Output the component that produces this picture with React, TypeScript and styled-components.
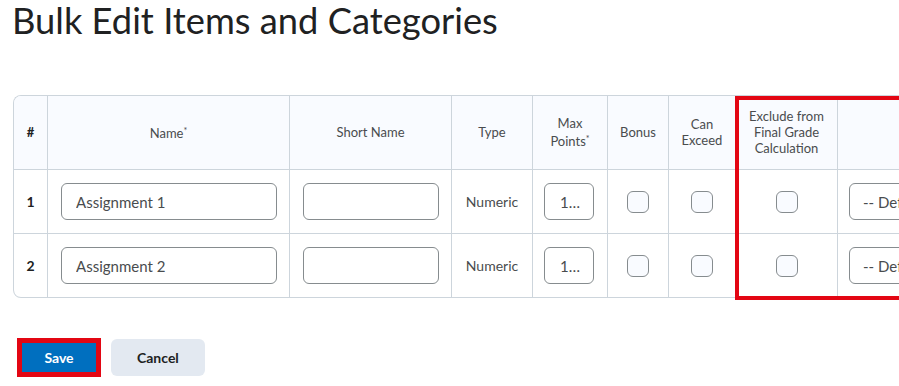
import React from "react"
import styled, { createGlobalStyle } from "styled-components"

const GlobalStyle = createGlobalStyle`
  html, body {
    margin: 0;
    padding: 0;
    overflow: hidden;
    background: #ffffff;
  }
  body {
    font-family: "Lato", "Open Sans", sans-serif;
    color: #202122;
  }
`

const items = [
  { id: 1, name: "Assignment 1", shortName: "", type: "Numeric", maxPoints: "100" },
  { id: 2, name: "Assignment 2", shortName: "", type: "Numeric", maxPoints: "100" },
]

const App = () => {
  return (
    <Page>
      <GlobalStyle />
      <Title>Bulk Edit Items and Categories</Title>
      <Grid>
        <HeadCell corner="top">#</HeadCell>
        <HeadCell>
          <Label>
            Name<Star>*</Star>
          </Label>
        </HeadCell>
        <HeadCell>Short Name</HeadCell>
        <HeadCell>Type</HeadCell>
        <HeadCell>
          <Label>
            Max
            <br />
            Points<Star>*</Star>
          </Label>
        </HeadCell>
        <HeadCell>Bonus</HeadCell>
        <HeadCell>
          <Label>
            Can
            <br />
            Exceed
          </Label>
        </HeadCell>
        <HeadCell>
          <Label>
            Exclude from
            <br />
            Final Grade
            <br />
            Calculation
          </Label>
        </HeadCell>
        <HeadCell />

        {items.map((item, i) => (
          <React.Fragment key={item.id}>
            <NumCell corner={i === items.length - 1 ? "bottom" : undefined}>
              {item.id}
            </NumCell>
            <InputCell>
              <TextInput defaultValue={item.name} />
            </InputCell>
            <InputCell>
              <TextInput defaultValue={item.shortName} />
            </InputCell>
            <Cell>{item.type}</Cell>
            <Cell>
              <PointsInput defaultValue={item.maxPoints} />
            </Cell>
            <Cell>
              <Checkbox type="checkbox" />
            </Cell>
            <Cell>
              <Checkbox type="checkbox" />
            </Cell>
            <Cell>
              <Checkbox type="checkbox" />
            </Cell>
            <SelectCell>
              <Select>
                <option>-- Default Category --</option>
              </Select>
            </SelectCell>
          </React.Fragment>
        ))}

        <ColumnHighlight />
      </Grid>

      <Actions>
        <SaveHighlight>
          <PrimaryButton>Save</PrimaryButton>
        </SaveHighlight>
        <Button>Cancel</Button>
      </Actions>
    </Page>
  )
}

const Page = styled.div`
  padding: 0 0 0 13px;
  width: 1200px;
`

const Title = styled.h1`
  margin: 0 0 0 -1px;
  padding-top: 2px;
  font-size: 36.3px;
  line-height: 36px;
  font-weight: 400;
  color: #202122;
`

const Grid = styled.div`
  position: relative;
  margin-top: 57px;
  display: grid;
  grid-template-columns: 34px 242px 162px 81px 75px 61px 67px 102px 200px;
  grid-template-rows: 74px 64px 64px;
  border-top: 1px solid #cdd5dc;
  border-left: 1px solid #cdd5dc;
  border-radius: 8px 0 0 8px;
  width: max-content;
`

const Cell = styled.div`
  box-sizing: border-box;
  display: flex;
  align-items: center;
  justify-content: center;
  border-right: 1px solid #cdd5dc;
  border-bottom: 1px solid #cdd5dc;
  font-size: 14px;
  color: #494c4e;
  text-align: center;
`

const HeadCell = styled(Cell)<{ corner?: "top" }>`
  background: #f9fbff;
  font-size: 13px;
  line-height: 16px;
  padding-bottom: 2px;
  border-top-left-radius: ${(p) => (p.corner === "top" ? "7px" : "0")};
  font-weight: ${(p) => (p.corner === "top" ? 700 : 400)};
  color: ${(p) => (p.corner === "top" ? "#202122" : "#494c4e")};
`

const Label = styled.span`
  display: block;
`

const Star = styled.span`
  font-size: 9px;
  vertical-align: 4px;
`

const NumCell = styled(Cell)<{ corner?: "bottom" }>`
  font-weight: 700;
  color: #202122;
  border-bottom-left-radius: ${(p) => (p.corner === "bottom" ? "7px" : "0")};
`

const InputCell = styled(Cell)`
  padding: 0 12px 0 13px;
`

const SelectCell = styled(Cell)`
  justify-content: flex-start;
  padding-left: 11px;
  border-right: none;
`

const TextInput = styled.input`
  box-sizing: border-box;
  width: 100%;
  height: 37px;
  padding: 0 14px;
  border: 1px solid #868c8f;
  border-radius: 6px;
  background: #ffffff;
  font-family: "Lato", sans-serif;
  font-size: 15px;
  color: #494c4e;
  outline: none;
`

const PointsInput = styled(TextInput)`
  width: 50px;
  padding: 0 13px 0 15px;
  text-overflow: ellipsis;
  margin-left: -2px;
`

const Checkbox = styled.input`
  appearance: none;
  margin: 0;
  width: 22px;
  height: 22px;
  border: 1px solid #868c8f;
  border-radius: 6px;
  background: #f9fbff;
`

const Select = styled.select`
  appearance: none;
  box-sizing: border-box;
  width: 190px;
  height: 37px;
  padding: 0 13px;
  border: 1px solid #868c8f;
  border-radius: 6px;
  background: #ffffff;
  font-family: "Lato", sans-serif;
  font-size: 15px;
  color: #494c4e;
`

const ColumnHighlight = styled.div`
  position: absolute;
  grid-column: 8;
  grid-row: 1 / 4;
  top: 0;
  bottom: -2px;
  left: -1px;
  right: -1px;
  border: 4px solid #e30613;
  pointer-events: none;
`

const Actions = styled.div`
  display: flex;
  align-items: center;
  gap: 10px;
  margin-top: 40px;
  padding-left: 4px;
`

const SaveHighlight = styled.span`
  display: inline-flex;
  border: 5px solid #e30613;
`

const Button = styled.button`
  height: 37px;
  padding: 0 26px;
  border: none;
  border-radius: 6px;
  background: #e3e9f1;
  font-family: "Lato", sans-serif;
  font-size: 14px;
  font-weight: 700;
  color: #202122;
  cursor: pointer;
`

const PrimaryButton = styled(Button)`
  height: 29px;
  width: 74px;
  padding: 0;
  border-radius: 0;
  background: #006fbf;
  color: #ffffff;
`

export default App
